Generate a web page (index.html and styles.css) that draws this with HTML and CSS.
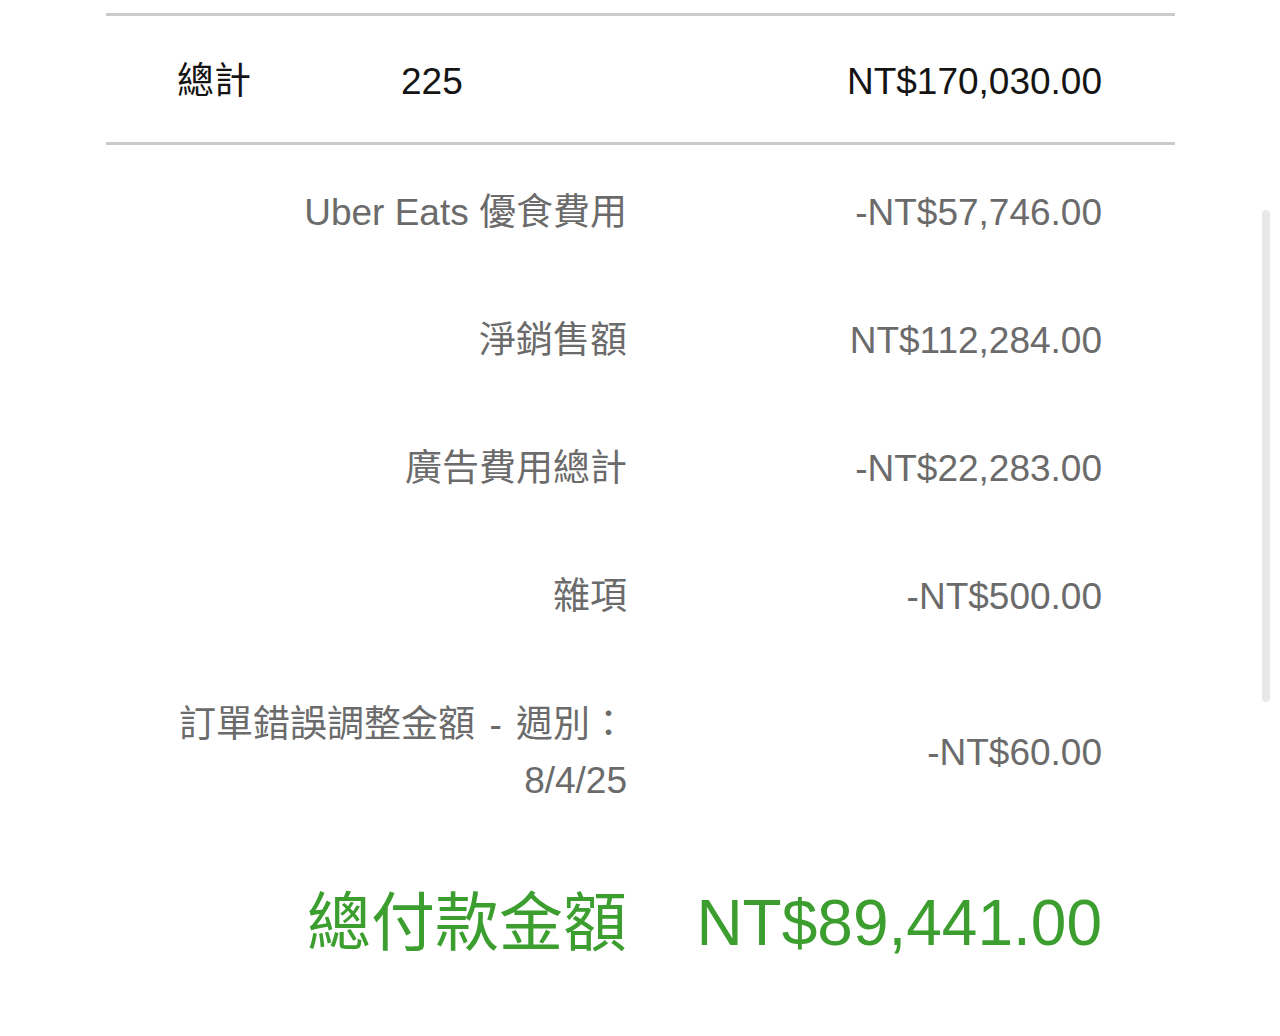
FILE: index.html
```html
<!DOCTYPE html>
<html lang="zh-Hant">
<head>
    <meta charset="UTF-8">
    <meta name="viewport" content="width=device-width, initial-scale=1.0">
    <title>付款明細</title>
    <link rel="stylesheet" href="styles.css">
</head>
<body>
    <div class="statement">
        <div class="total-row">
            <span class="total-label">總計</span>
            <span class="total-count">225</span>
            <span class="total-amount">NT$170,030.00</span>
        </div>

        <div class="summary">
            <div class="summary-row">
                <div class="label">Uber Eats 優食費用</div>
                <div class="value">-NT$57,746.00</div>
            </div>
            <div class="summary-row">
                <div class="label">淨銷售額</div>
                <div class="value">NT$112,284.00</div>
            </div>
            <div class="summary-row">
                <div class="label">廣告費用總計</div>
                <div class="value">-NT$22,283.00</div>
            </div>
            <div class="summary-row">
                <div class="label">雜項</div>
                <div class="value">-NT$500.00</div>
            </div>
            <div class="summary-row">
                <div class="label wide-gap">訂單錯誤調整金額 - 週別：<br>8/4/25</div>
                <div class="value">-NT$60.00</div>
            </div>
            <div class="summary-row payout">
                <div class="label">總付款金額</div>
                <div class="value">NT$89,441.00</div>
            </div>
        </div>
    </div>

    <div class="scrollbar"></div>
</body>
</html>
```

FILE: styles.css
```css
body {
    font-family: 'Liberation Sans', 'Noto Sans CJK TC', sans-serif;
    margin: 0;
    padding: 13px 0 0;
    background: #fff;
    color: #141414;
}
.statement {
    width: 1069px;
    margin-left: 106px;
}
.total-row {
    display: flex;
    align-items: center;
    border-top: 3px solid #cbcbcb;
    border-bottom: 3px solid #cbcbcb;
    padding: 38px 73px 32px 71px;
    font-size: 37px;
    line-height: 56px;
}
.total-label {
    width: 224px;
}
.total-amount {
    margin-left: auto;
}
.summary {
    padding: 4px 73px 0 0;
}
.summary-row {
    display: grid;
    grid-template-columns: 521px 1fr;
    align-items: center;
    padding: 36px 0;
    font-size: 37px;
    line-height: 56px;
    color: #6b6b6b;
}
.summary-row .label {
    text-align: right;
}
.summary-row .wide-gap {
    word-spacing: 4px;
}
.summary-row .value {
    text-align: right;
}
.payout {
    padding-top: 40px;
    font-size: 64px;
    line-height: 76px;
    color: #3b9e2e;
}
.scrollbar {
    position: absolute;
    top: 210px;
    left: 1262px;
    width: 8px;
    height: 492px;
    border-radius: 4px;
    background: #e8e8e8;
}
```
